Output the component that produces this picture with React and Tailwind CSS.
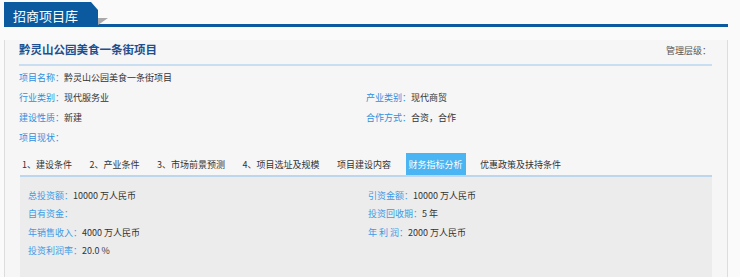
import React from "react";

const F = { fontFamily: '"Noto Sans CJK SC", "Noto Sans", sans-serif' };

function Row({ label, value }) {
  return (
    <div className="flex items-center h-[20px] text-[9px] leading-none">
      <span className="text-[#2f8fdc]">{label}</span>
      <span className="text-[#333]">{value}</span>
    </div>
  );
}

function PRow({ label, value }) {
  return (
    <div className="flex items-center h-[18.5px] text-[9px] leading-none">
      <span className="text-[#3d9be6]">{label}</span>
      <span className="text-[#333]">{value}</span>
    </div>
  );
}

const tabs = [
  "1、建设条件",
  "2、产业条件",
  "3、市场前景预测",
  "4、项目选址及规模",
  "项目建设内容",
  "财务指标分析",
  "优惠政策及扶持条件",
];

export default function App() {
  return (
    <div className="w-[740px] h-[277px] bg-[#fafafa] overflow-hidden" style={F}>
      {/* header */}
      <div className="flex items-end h-[27px] pl-[4px] pr-[12px] pt-[2px]">
        <div
          className="w-[94px] h-[25px] bg-[#0b5a9f] text-white text-[13px] leading-none flex items-center pl-[9px] pt-[1px]"
          style={{ clipPath: "polygon(0 0, 87px 0, 100% 8px, 100% 100%, 0 100%)" }}
        >
          招商项目库
        </div>
        <div className="relative flex-1 h-[3px] bg-[#0b5a9f]">
          <div
            className="absolute left-0 bottom-[2px] w-[10px] h-[7px] bg-[#a9a9a9]"
            style={{ clipPath: "polygon(0 0, 100% 0, 0 100%)" }}
          />
        </div>
      </div>
      {/* box */}
      <div className="ml-[4px] w-[724px] h-[250px] bg-[#f6f6f6] border-l border-r border-[#dddddd] pl-[14px] pr-[14px]">
        <div className="flex items-center justify-between h-[20px] mt-[13px]">
          <span className="text-[11.5px] font-bold text-[#1c4f8f] leading-none">黔灵山公园美食一条街项目</span>
          <span className="text-[9px] text-[#555] leading-none mr-[2px]">管理层级：</span>
        </div>
        <div className="h-[2px] bg-[#c9def1] mt-[4px] mr-[1px]" />
        <div className="mt-[1px]">
          <Row label="项目名称：" value="黔灵山公园美食一条街项目" />
          <div className="flex">
            <div className="w-[347px]">
              <Row label="行业类别：" value="现代服务业" />
              <Row label="建设性质：" value="新建" />
            </div>
            <div>
              <Row label="产业类别：" value="现代商贸" />
              <Row label="合作方式：" value="合资，合作" />
            </div>
          </div>
          <Row label="项目现状：" value="" />
        </div>
        {/* tabs */}
        <div className="flex items-end h-[22px] mt-[6px] gap-[11.5px]">
          {tabs.map((t, i) =>
            i === 5 ? (
              <div key={t} className="h-[22px] px-[3px] bg-[#4bb4f2] text-white text-[9px] leading-none flex items-center">
                {t}
              </div>
            ) : (
              <div key={t} className="h-[22px] px-[3px] text-[#333] text-[9px] leading-none flex items-center">
                {t}
              </div>
            )
          )}
        </div>
        <div className="ml-[1px] mr-[1px] h-[120px] bg-[#ececec] border-t-2 border-[#bcd6ee] pl-[8px] pt-[9px]">
          <div className="flex">
            <div className="w-[340px]">
              <PRow label="总投资额：" value="10000 万人民币" />
              <PRow label="自有资金：" value="" />
              <PRow label="年销售收入：" value="4000 万人民币" />
              <PRow label="投资利润率：" value="20.0 %" />
            </div>
            <div>
              <PRow label="引资金额：" value="10000 万人民币" />
              <PRow label="投资回收期：" value="5 年" />
              <PRow label="年 利 润：" value="2000 万人民币" />
            </div>
          </div>
        </div>
      </div>
    </div>
  );
}
